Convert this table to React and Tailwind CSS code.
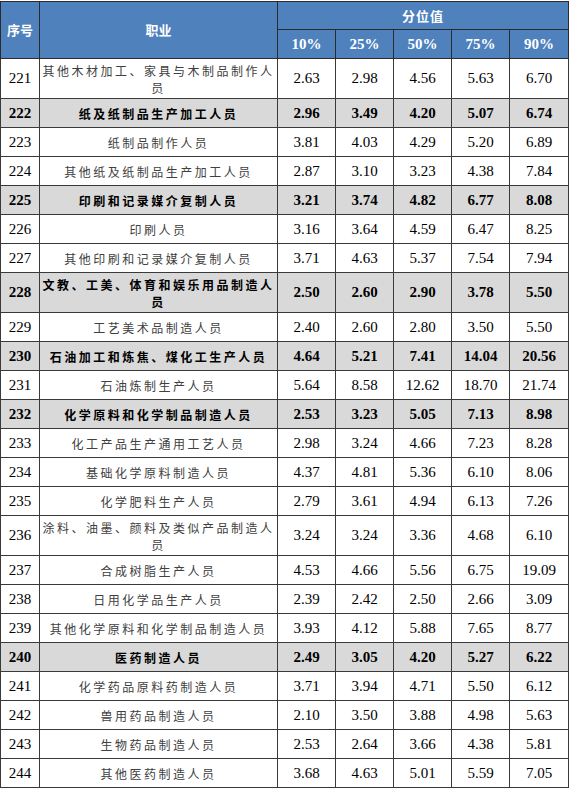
const rows = [
  ["221", "其他木材加工、家具与木制品制作人|员", "2.63", "2.98", "4.56", "5.63", "6.70"],
  ["222", "纸及纸制品生产加工人员", "2.96", "3.49", "4.20", "5.07", "6.74", true],
  ["223", "纸制品制作人员", "3.81", "4.03", "4.29", "5.20", "6.89"],
  ["224", "其他纸及纸制品生产加工人员", "2.87", "3.10", "3.23", "4.38", "7.84"],
  ["225", "印刷和记录媒介复制人员", "3.21", "3.74", "4.82", "6.77", "8.08", true],
  ["226", "印刷人员", "3.16", "3.64", "4.59", "6.47", "8.25"],
  ["227", "其他印刷和记录媒介复制人员", "3.71", "4.63", "5.37", "7.54", "7.94"],
  ["228", "文教、工美、体育和娱乐用品制造人|员", "2.50", "2.60", "2.90", "3.78", "5.50", true],
  ["229", "工艺美术品制造人员", "2.40", "2.60", "2.80", "3.50", "5.50"],
  ["230", "石油加工和炼焦、煤化工生产人员", "4.64", "5.21", "7.41", "14.04", "20.56", true],
  ["231", "石油炼制生产人员", "5.64", "8.58", "12.62", "18.70", "21.74"],
  ["232", "化学原料和化学制品制造人员", "2.53", "3.23", "5.05", "7.13", "8.98", true],
  ["233", "化工产品生产通用工艺人员", "2.98", "3.24", "4.66", "7.23", "8.28"],
  ["234", "基础化学原料制造人员", "4.37", "4.81", "5.36", "6.10", "8.06"],
  ["235", "化学肥料生产人员", "2.79", "3.61", "4.94", "6.13", "7.26"],
  ["236", "涂料、油墨、颜料及类似产品制造人|员", "3.24", "3.24", "3.36", "4.68", "6.10"],
  ["237", "合成树脂生产人员", "4.53", "4.66", "5.56", "6.75", "19.09"],
  ["238", "日用化学品生产人员", "2.39", "2.42", "2.50", "2.66", "3.09"],
  ["239", "其他化学原料和化学制品制造人员", "3.93", "4.12", "5.88", "7.65", "8.77"],
  ["240", "医药制造人员", "2.49", "3.05", "4.20", "5.27", "6.22", true],
  ["241", "化学药品原料药制造人员", "3.71", "3.94", "4.71", "5.50", "6.12"],
  ["242", "兽用药品制造人员", "2.10", "3.50", "3.88", "4.98", "5.63"],
  ["243", "生物药品制造人员", "2.53", "2.64", "3.66", "4.38", "5.81"],
  ["244", "其他医药制造人员", "3.68", "4.63", "5.01", "5.59", "7.05"],
];

const serif = "font-['Liberation_Serif','Times_New_Roman',serif]";
const cjk = "font-['Noto_Sans_CJK_SC',sans-serif]";

export default function App() {
  return (
    <div className="bg-white w-[569px] pt-[1px]">
      <table className="table-fixed border-collapse w-[569px] border border-[#3a3a3a]">
        <colgroup>
          <col className="w-[39px]" />
          <col className="w-[238px]" />
          <col className="w-[58px]" />
          <col className="w-[58px]" />
          <col className="w-[58px]" />
          <col className="w-[58px]" />
          <col className="w-[59px]" />
        </colgroup>
        <thead className="bg-[#4f81bd] text-white">
          <tr className="h-[28px]">
            <th rowSpan={2} className={`border border-[#2b2b2b] text-[13px] font-bold ${cjk}`}>序号</th>
            <th rowSpan={2} className={`border border-[#2b2b2b] text-[13px] font-bold ${cjk}`}>职业</th>
            <th colSpan={5} className={`border border-[#2b2b2b] text-[13px] font-bold tracking-[1px] ${cjk}`}>分位值</th>
          </tr>
          <tr className="h-[29px]">
            {["10%", "25%", "50%", "75%", "90%"].map((p) => (
              <th key={p} className={`border border-[#2b2b2b] text-[15px] font-bold ${serif}`}>{p}</th>
            ))}
          </tr>
        </thead>
        <tbody>
          {rows.map((r) => {
            const bold = r[7] === true;
            const parts = r[1].split("|");
            const two = parts.length > 1;
            return (
              <tr key={r[0]} className={`${two ? "h-[40px]" : "h-[29px]"} ${bold ? "bg-[#d9d9d9] font-bold" : "bg-white"}`}>
                <td className={`border border-[#3a3a3a] text-center text-[15px] text-black ${serif}`}>{r[0]}</td>
                <td className={`border border-[#3a3a3a] text-center text-[12px] leading-[17px] tracking-[2.5px] whitespace-nowrap px-0 ${bold ? "text-black" : "text-[#404040]"} ${cjk}`}>
                  {parts[0]}
                  {two && <br />}
                  {two && parts[1]}
                </td>
                {r.slice(2, 7).map((v, i) => (
                  <td key={i} className={`border border-[#3a3a3a] text-center text-[15px] text-black ${serif}`}>{v}</td>
                ))}
              </tr>
            );
          })}
        </tbody>
      </table>
    </div>
  );
}
